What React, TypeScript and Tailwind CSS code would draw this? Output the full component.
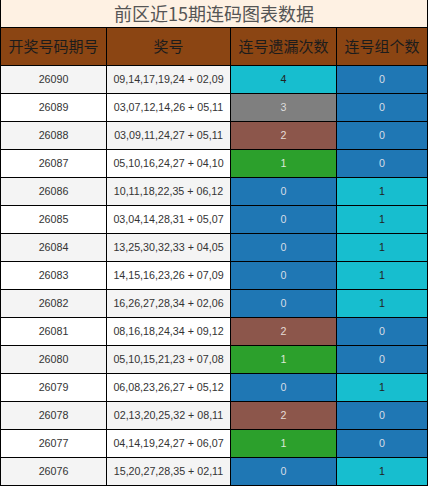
const rows: [string, string, number, number][] = [
  ['26090', '09,14,17,19,24 + 02,09', 4, 0],
  ['26089', '03,07,12,14,26 + 05,11', 3, 0],
  ['26088', '03,09,11,24,27 + 05,11', 2, 0],
  ['26087', '05,10,16,24,27 + 04,10', 1, 0],
  ['26086', '10,11,18,22,35 + 06,12', 0, 1],
  ['26085', '03,04,14,28,31 + 05,07', 0, 1],
  ['26084', '13,25,30,32,33 + 04,05', 0, 1],
  ['26083', '14,15,16,23,26 + 07,09', 0, 1],
  ['26082', '16,26,27,28,34 + 02,06', 0, 1],
  ['26081', '08,16,18,24,34 + 09,12', 2, 0],
  ['26080', '05,10,15,21,23 + 07,08', 1, 0],
  ['26079', '06,08,23,26,27 + 05,12', 0, 1],
  ['26078', '02,13,20,25,32 + 08,11', 2, 0],
  ['26077', '04,14,19,24,27 + 06,07', 1, 0],
  ['26076', '15,20,27,28,35 + 02,11', 0, 1],
];

// tab10-style colours by count
const missColor: Record<number, string> = {
  0: 'bg-[#1f77b4] text-[#d6dde6]',
  1: 'bg-[#2ca02c] text-[#dde8d8]',
  2: 'bg-[#8c564b] text-[#e6dcd8]',
  3: 'bg-[#7f7f7f] text-[#dddddd]',
  4: 'bg-[#17becf] text-[#222222]',
};

const groupColor: Record<number, string> = {
  0: 'bg-[#1f77b4] text-[#d6dde6]',
  1: 'bg-[#17becf] text-[#222222]',
};

const cell = 'flex h-[27px] items-center justify-center';

export default function App() {
  return (
    <div className="w-[428px] bg-black px-px pb-px font-['Noto_Sans_CJK_SC',sans-serif]">
      <div className="grid grid-cols-[105px_123px_105px_90px] gap-px">
        <div className="col-span-4 flex h-[27px] items-center justify-center bg-[#fef1e3] text-[18px] text-[#555555]">
          前区近15期连码图表数据
        </div>
        {['开奖号码期号', '奖号', '连号遗漏次数', '连号组个数'].map((h) => (
          <div
            key={h}
            className="flex h-[37px] items-center justify-center bg-[#8b4513] text-[15px] text-[#1c1c1c]"
          >
            {h}
          </div>
        ))}
        {rows.map(([issue, nums, miss, group], i) => {
          const bg = i % 2 === 0 ? 'bg-[#f4f4f4]' : 'bg-white';
          return [
            <div
              key={issue + 'a'}
              className={`${cell} ${bg} font-['Liberation_Sans',sans-serif] text-[10.7px] text-[#333333]`}
            >
              {issue}
            </div>,
            <div
              key={issue + 'b'}
              className={`${cell} ${bg} font-['Liberation_Sans',sans-serif] text-[10.7px] text-[#333333]`}
            >
              {nums}
            </div>,
            <div
              key={issue + 'c'}
              className={`${cell} ${missColor[miss]} font-['Liberation_Sans',sans-serif] text-[10.7px]`}
            >
              {miss}
            </div>,
            <div
              key={issue + 'd'}
              className={`${cell} ${groupColor[group]} font-['Liberation_Sans',sans-serif] text-[10.7px]`}
            >
              {group}
            </div>,
          ];
        })}
      </div>
    </div>
  );
}
